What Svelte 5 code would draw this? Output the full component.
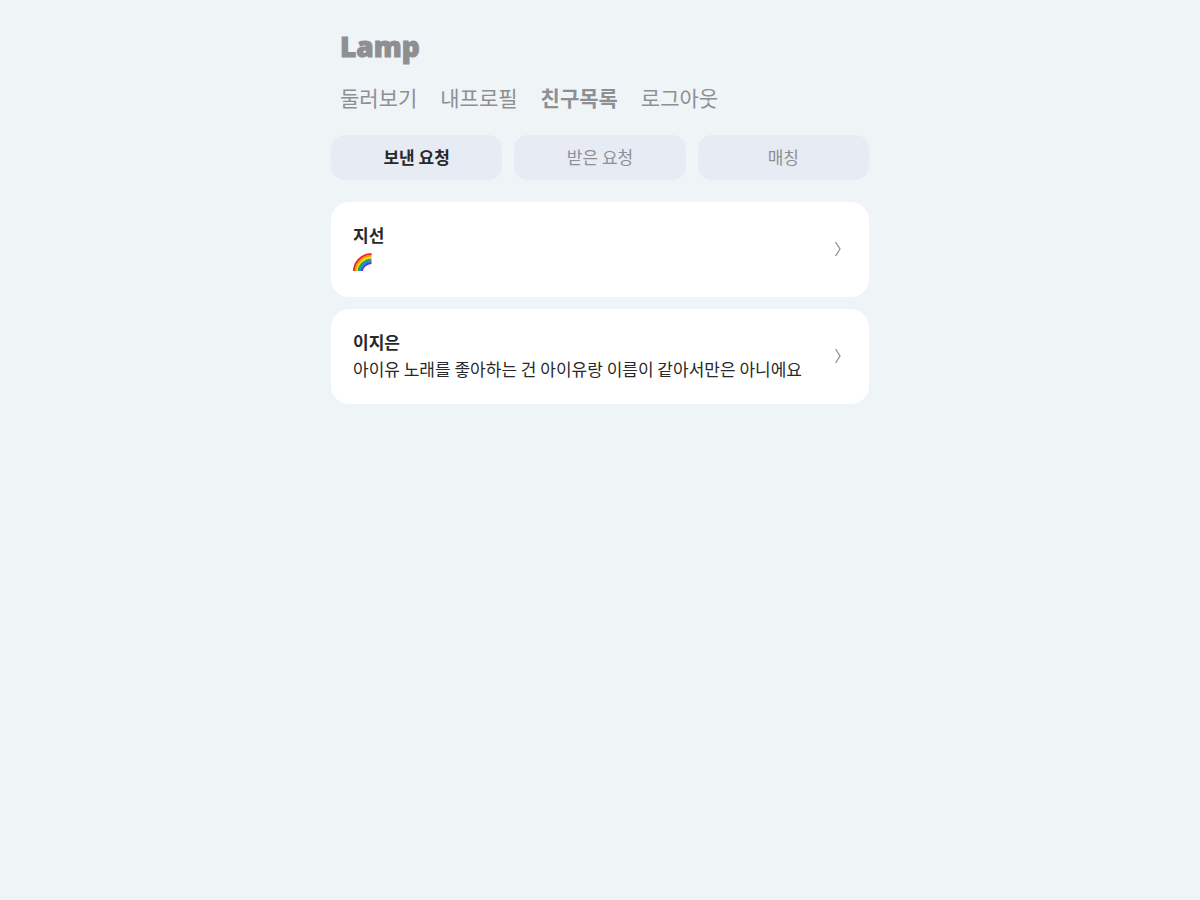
<script>
  const menu = ['둘러보기', '내프로필', '친구목록', '로그아웃'];
  const tabs = ['보낸 요청', '받은 요청', '매칭'];
  const friends = [
    { name: '지선', rainbow: true },
    { name: '이지은', message: '아이유 노래를 좋아하는 건 아이유랑 이름이 같아서만은 아니에요' }
  ];
  const bands = ['#e8232a', '#ff8a00', '#ffe000', '#20ad3c', '#1688e0', '#5a32d9'];
  let current = $state('친구목록');
  let tab = $state('보낸 요청');
</script>

<div class="page">
  <header>
    <h1><a href="#home">Lamp</a></h1>
    <nav>
      {#each menu as item}
        <a href="#{item}" class:active={item === current} onclick={() => (current = item)}>{item}</a>
      {/each}
    </nav>
  </header>

  <main>
    <div class="tabs">
      {#each tabs as item}
        <button type="button" class:active={item === tab} onclick={() => (tab = item)}>{item}</button>
      {/each}
    </div>
    <ul>
      {#each friends as friend}
        <li>
          <a class="card" href="#{friend.name}">
            <span class="text">
              <strong>{friend.name}</strong>
              {#if friend.rainbow}
                <span class="message">
                  <svg class="rainbow" viewBox="0 0 19 21" role="img" aria-label="🌈">
                    {#each bands as color, i}
                      <path d="M{1 + i * 1.6} 20C{1 + i * 1.6} {12 + i} {8 + i} {3 + i * 1.8} 18.5 {3 + i * 1.8}" stroke={color} />
                    {/each}
                  </svg>
                </span>
              {:else}
                <span class="message">{friend.message}</span>
              {/if}
            </span>
            <svg class="arrow" viewBox="0 0 8 18" aria-hidden="true">
              <path d="M1.5 3L6 10L1.5 17" />
            </svg>
          </a>
        </li>
      {/each}
    </ul>
  </main>
</div>

<style>
  :global(body) {
    background: #eff4f7;
  }

  .page {
    box-sizing: border-box;
    max-width: 538px;
    margin: 0 auto;
    padding: 31px 0;
    color: #28292b;
    font-family: "Noto Sans CJK KR", "Noto Sans", sans-serif;
    font-size: 17px;
    line-height: 27px;
  }

  a {
    color: inherit;
    text-decoration: none;
  }

  header {
    padding: 0 9px;
    color: #8d8f93;
  }

  h1 {
    margin: 0;
    font-family: "Noto Sans", sans-serif;
    font-size: 28px;
    font-weight: 900;
    line-height: 30px;
    -webkit-text-stroke: 1px currentColor;
  }

  nav {
    display: flex;
    flex-wrap: wrap;
    gap: 0 23px;
    margin-top: 20px;
    font-size: 21px;
    line-height: 32px;
  }

  nav .active {
    font-weight: 700;
  }

  .tabs {
    display: grid;
    grid-template-columns: repeat(3, 1fr);
    gap: 12px;
    margin-top: 22px;
  }

  button {
    padding: 8px 9px 10px;
    border: 0;
    border-radius: 14px;
    background: #e7ebf4;
    color: #8d8f93;
    font: inherit;
    cursor: pointer;
  }

  button.active {
    color: #28292b;
    font-weight: 700;
  }

  ul {
    display: grid;
    gap: 12px;
    margin: 22px 0 0;
    padding: 0;
    list-style: none;
  }

  .card {
    display: flex;
    align-items: center;
    justify-content: space-between;
    padding: 19px 27px 22px 22px;
    border-radius: 18px;
    background: #fff;
  }

  .text {
    display: flex;
    flex-direction: column;
  }

  .message {
    display: flex;
    align-items: center;
    min-height: 27px;
  }

  .rainbow {
    width: 19px;
    height: 21px;
    fill: none;
    stroke-width: 2;
  }

  .arrow {
    flex: none;
    width: 8px;
    height: 18px;
    fill: none;
    stroke: #8d8f93;
    stroke-width: 1.3;
  }
</style>
